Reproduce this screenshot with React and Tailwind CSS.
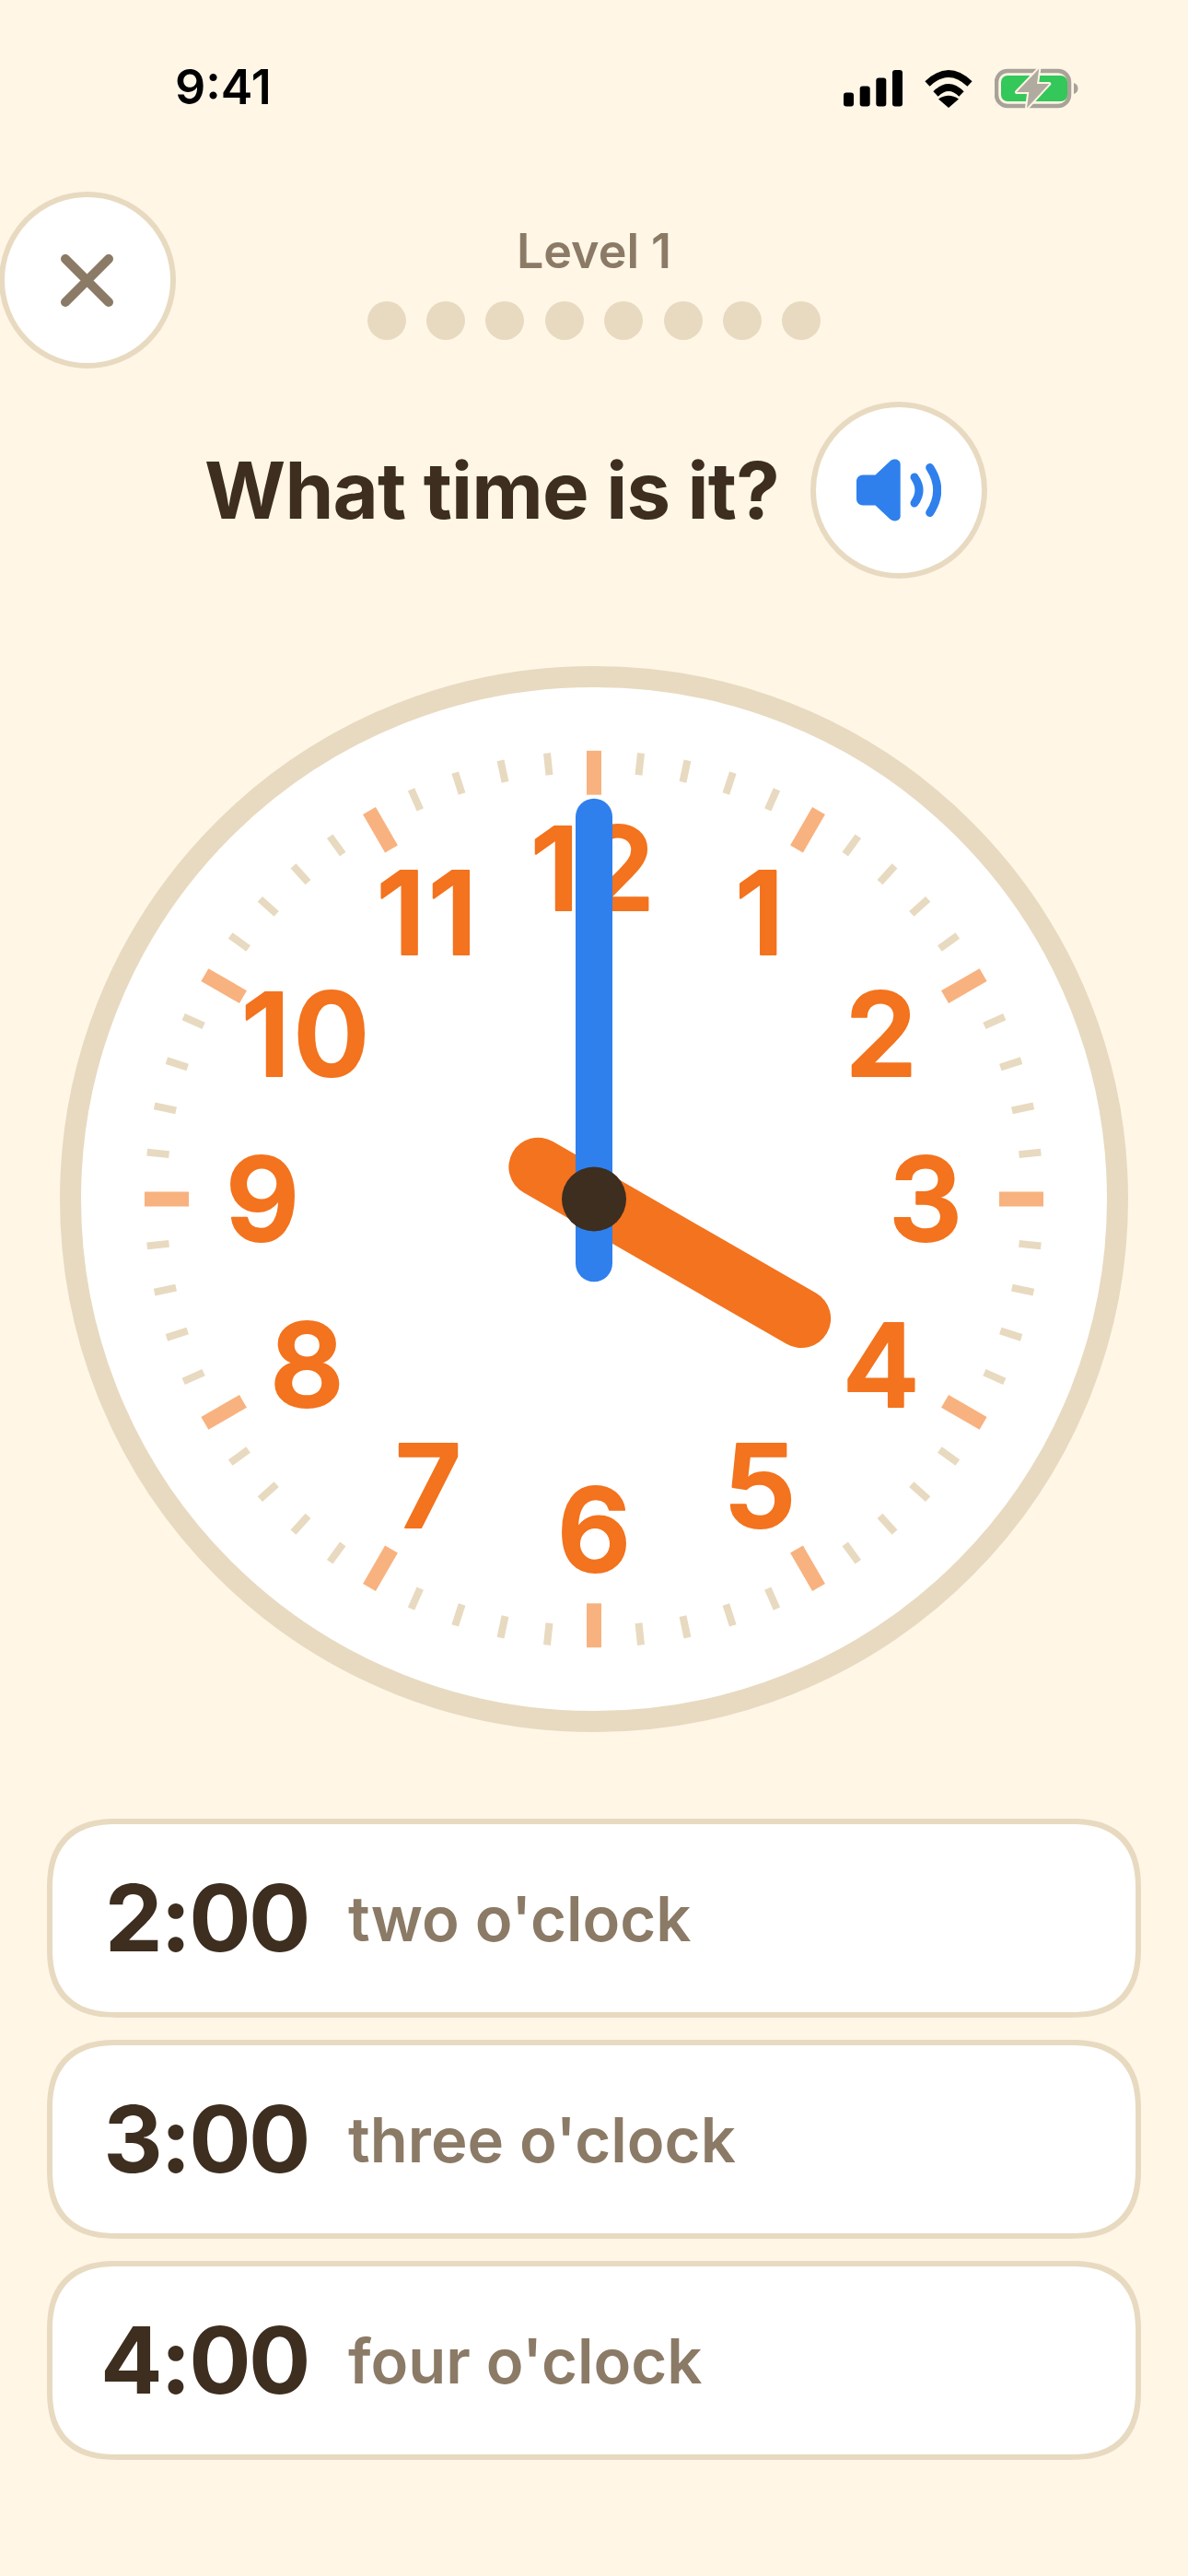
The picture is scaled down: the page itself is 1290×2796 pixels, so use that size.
const OPTIONS = [
  { time: '2:00', label: "two o'clock" },
  { time: '3:00', label: "three o'clock" },
  { time: '4:00', label: "four o'clock" },
]

const NUMBERS = [12, 1, 2, 3, 4, 5, 6, 7, 8, 9, 10, 11]
const TICKS = Array.from({ length: 60 }, (_, i) => i)

function StatusIcons() {
  return (
    <div className="flex items-center gap-[22px]">
      <svg width="64" height="40" viewBox="0 0 64 40">
        <rect x="0" y="24.5" width="11" height="15" rx="3" fill="#000" />
        <rect x="17.7" y="17.5" width="11" height="22" rx="3" fill="#000" />
        <rect x="35.3" y="8.5" width="11" height="31" rx="3" fill="#000" />
        <rect x="53" y="0" width="11" height="39.5" rx="3" fill="#000" />
      </svg>
      <svg width="56" height="41" viewBox="0 0 56 41">
        <path d="M5 15 Q28 -7 51 15" fill="none" stroke="#000" strokeWidth="7.5" />
        <path d="M14 26 Q28 12 42 26" fill="none" stroke="#000" strokeWidth="7.5" />
        <path d="M17 31.5 Q28 24 39 31.5 L28 41 Z" fill="#000" />
      </svg>
      <svg width="91" height="44" viewBox="0 -1 91 44">
        <rect x="2" y="2" width="79" height="38" rx="12" fill="none" stroke="#a8a298" strokeWidth="4.5" />
        <rect x="7" y="7" width="72" height="28" rx="7" fill="#34c759" />
        <path d="M86 15 C89 16 90.500 18 90.500 21 C90.500 24 89 26 86 27 Z" fill="#a8a298" />
        <path
          d="M48.300 -0.500 L24 25 L37.300 25 L35 42.300 L59.300 16 L46 16 Z"
          fill="#b1aa9f"
          stroke="#fff6e6"
          strokeWidth="4"
          strokeLinejoin="round"
          paintOrder="stroke"
        />
      </svg>
    </div>
  )
}

function CloseButton() {
  return (
    <button className="w-[192px] h-[192px] -ml-[1px] rounded-full bg-white border-[6px] border-[#e8dac0] flex items-center justify-center">
      <svg width="57" height="57" viewBox="0 0 57 57" className="-ml-[2px]">
        <path d="M5 5 L52 52 M52 5 L5 52" stroke="#8b7a66" strokeWidth="10" strokeLinecap="round" />
      </svg>
    </button>
  )
}

function SpeakerButton() {
  return (
    <button className="w-[192px] h-[192px] rounded-full bg-white border-[6px] border-[#e8dac0] flex items-center justify-center">
      <svg width="92" height="68" viewBox="0 0 92 68">
        <path
          d="M7 17.500 H20.500 L36.500 2.500 C40.500 -1 47.700 0.500 47.700 6 V62 C47.700 67.500 41 69 36.500 65.500 L20.500 50.500 H7 C3 50.500 0 47.500 0 43.500 V24.500 C0 20.500 3 17.500 7 17.500 Z"
          fill="#2f80ed"
        />
        <path d="M63 20 Q73 34 63 48" fill="none" stroke="#2f80ed" strokeWidth="9" strokeLinecap="round" />
        <path d="M79.700 9.500 Q95.700 34 79.700 58.500" fill="none" stroke="#2f80ed" strokeWidth="9" strokeLinecap="round" />
      </svg>
    </button>
  )
}

function ClockFace() {
  return (
    <svg width="1114" height="1111" viewBox="-557 -557 1114 1114" preserveAspectRatio="none" className="block">
      {TICKS.map((i) => {
        const major = i % 5 === 0
        return (
          <line
            key={i}
            x1="0"
            y1="-488"
            x2="0"
            y2={major ? -440 : -464}
            stroke={major ? '#f8b27f' : '#e8dac0'}
            strokeWidth={major ? 16 : 8}
            transform={`rotate(${i * 6})`}
          />
        )
      })}
      {NUMBERS.map((n, i) => {
        const a = (i * 30 * Math.PI) / 180
        return (
          <text
            key={n}
            x={360 * Math.sin(a)}
            y={-360 * Math.cos(a) + 46}
            textAnchor="middle"
            fontFamily="Inter, sans-serif"
            fontWeight="600"
            fontSize="126"
            letterSpacing={n > 9 ? 3 : 0}
            fill="#f3731e"
            stroke="#f3731e"
            strokeWidth="2"
            strokeLinejoin="round"
          >
            {n}
          </text>
        )
      })}
      <line
        x1={-0.866 * 70}
        y1={-0.5 * 70}
        x2={0.866 * 260}
        y2={0.5 * 260}
        stroke="#f3731e"
        strokeWidth="64"
        strokeLinecap="round"
      />
      <line x1="0" y1="70" x2="0" y2="-416" stroke="#2f80ed" strokeWidth="40" strokeLinecap="round" />
      <circle cx="0" cy="0" r="35" fill="#3d2e1f" />
    </svg>
  )
}

function OptionCard({ time, label }) {
  return (
    <div className="h-[216px] rounded-[76px] [corner-shape:superellipse(1.3)] bg-white border-[6px] border-[#e8dac0] flex items-center">
      <span className="w-[278px] text-right text-[100px] leading-none font-bold tracking-[-2.5px] text-[#3d2e1f]">{time}</span>
      <span className="ml-[43px] text-[67px] leading-none font-semibold text-[#8b7a66]">{label}</span>
    </div>
  )
}

export default function App() {
  return (
    <div className="w-[1290px] h-[2796px] bg-[#fff6e6] flex flex-col font-['Inter',sans-serif]">
      <div className="h-[208px] pt-[74px] pl-[190px] pr-[119px] flex items-start justify-between">
        <span className="text-[52px] leading-[41px] font-semibold text-black">9:41</span>
        <StatusIcons />
      </div>

      <div className="grid grid-cols-[192px_1fr_192px] items-center h-[192px]">
        <CloseButton />
        <div className="flex flex-col items-center pt-[7px]">
          <div className="text-[52px] leading-none font-semibold text-[#8b7a66]">Level 1</div>
          <div className="mt-[28px] flex gap-[22.4px]">
            {[0, 1, 2, 3, 4, 5, 6, 7].map((i) => (
              <div key={i} className="w-[42px] h-[42px] rounded-full bg-[#e8dac0]" />
            ))}
          </div>
        </div>
        <div />
      </div>

      <div className="mt-[36px] h-[192px] pl-[222px] flex items-center gap-[34px]">
        <h1 className="text-[85px] leading-none font-bold tracking-[-0.8px] whitespace-nowrap text-[#3d2e1f]">What time is it?</h1>
        <SpeakerButton />
      </div>

      <div className="mt-[95px] self-center w-[1160px] h-[1157px] rounded-full bg-white border-[23px] border-[#e8dac0]">
        <ClockFace />
      </div>

      <div className="mt-[94px] px-[51px] flex flex-col gap-[24px]">
        {OPTIONS.map((o) => (
          <OptionCard key={o.time} time={o.time} label={o.label} />
        ))}
      </div>
    </div>
  )
}
